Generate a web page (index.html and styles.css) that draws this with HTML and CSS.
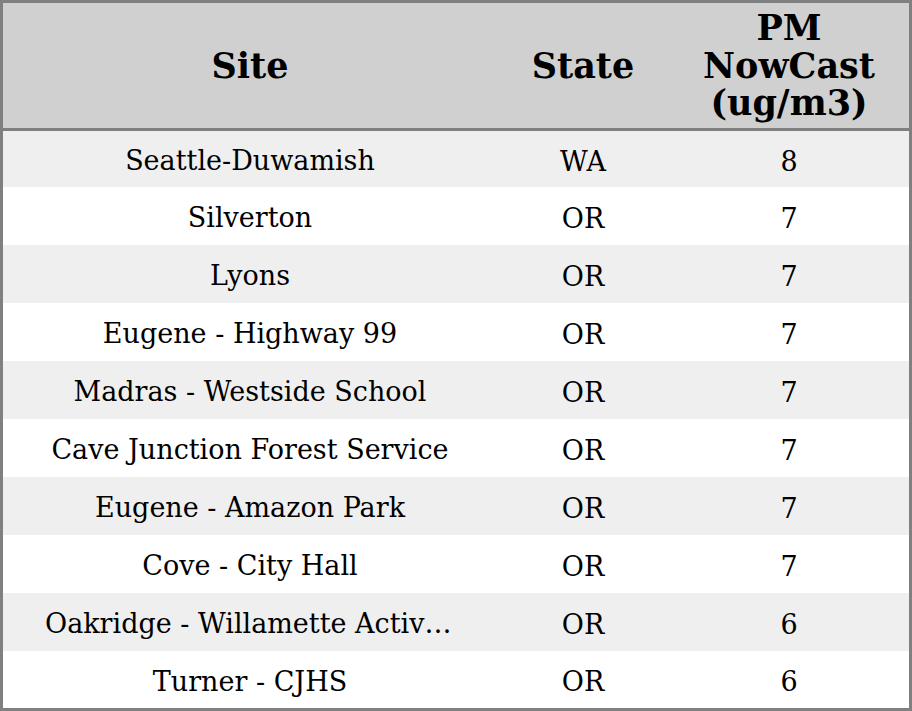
FILE: index.html
```html
<!DOCTYPE html>
<html>
<head>
<meta charset="utf-8">
<link rel="stylesheet" href="styles.css">
</head>
<body>
<div class="table">
  <div class="head">
    <div class="hcell">Site</div>
    <div class="hcell">State</div>
    <div class="hcell">PM<br>NowCast<br>(ug/m3)</div>
  </div>
  <div class="row odd"><div class="cell site">Seattle-Duwamish</div><div class="cell">WA</div><div class="cell">8</div></div>
  <div class="row"><div class="cell site">Silverton</div><div class="cell">OR</div><div class="cell">7</div></div>
  <div class="row odd"><div class="cell site">Lyons</div><div class="cell">OR</div><div class="cell">7</div></div>
  <div class="row"><div class="cell site">Eugene - Highway 99</div><div class="cell">OR</div><div class="cell">7</div></div>
  <div class="row odd"><div class="cell site">Madras - Westside School</div><div class="cell">OR</div><div class="cell">7</div></div>
  <div class="row"><div class="cell site">Cave Junction Forest Service</div><div class="cell">OR</div><div class="cell">7</div></div>
  <div class="row odd"><div class="cell site">Eugene - Amazon Park</div><div class="cell">OR</div><div class="cell">7</div></div>
  <div class="row"><div class="cell site">Cove - City Hall</div><div class="cell">OR</div><div class="cell">7</div></div>
  <div class="row odd"><div class="cell site">Oakridge - Willamette Activity Center</div><div class="cell">OR</div><div class="cell">6</div></div>
  <div class="row"><div class="cell site">Turner - CJHS</div><div class="cell">OR</div><div class="cell">6</div></div>
</div>
</body>
</html>
```
FILE: styles.css
```css
html, body {
  margin: 0;
  padding: 0;
  background: #ffffff;
}
.table {
  width: 912px;
  height: 711px;
  box-sizing: border-box;
  border: 3px solid #808080;
  font-family: "DejaVu Serif", serif;
  color: #000;
  display: flex;
  flex-direction: column;
}
.head, .row {
  display: grid;
  grid-template-columns: 494px 172px 240px;
}
.head {
  height: 125px;
  background: #d0d0d0;
  border-bottom: 3px solid #808080;
}
.hcell {
  display: flex;
  align-items: center;
  justify-content: center;
  text-align: center;
  font-weight: bold;
  font-size: 35px;
  line-height: 37.5px;
}
.row {
  height: 58px;
  background: #ffffff;
}
.row:nth-child(2) {
  height: 56px;
}
.row:last-child {
  height: 57px;
}
.row.odd {
  background: #efefef;
}
.cell {
  display: flex;
  align-items: center;
  justify-content: center;
  font-size: 27px;
  min-width: 0;
  padding-top: 4px;
}
.cell.site {
  display: block;
  line-height: 54px;
  text-align: center;
  padding: 4px 42px 0;
  white-space: nowrap;
  overflow: hidden;
  text-overflow: ellipsis;
}
.row:nth-child(2) .cell.site { line-height: 52px; }
.row:last-child .cell.site { line-height: 53px; }
```
